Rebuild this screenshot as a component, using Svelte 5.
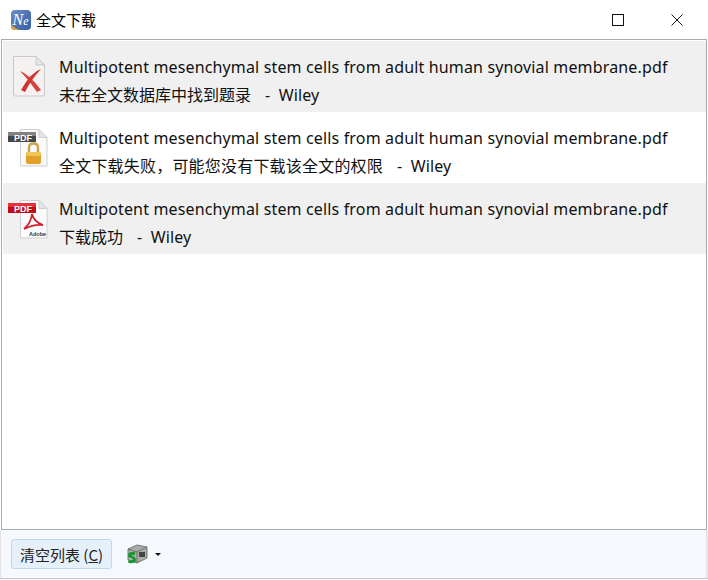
<script>
  const title = "Multipotent mesenchymal stem cells from adult human synovial membrane.pdf";
  const rows = [
    { kind: "missing", status: "未在全文数据库中找到题录", shaded: true, wide: false },
    { kind: "locked", status: "全文下载失败，可能您没有下载该全文的权限", shaded: false, wide: true },
    { kind: "ok", status: "下载成功", shaded: true, wide: false }
  ];
</script>

<div class="window">
  <header class="titlebar">
    <svg class="logo" width="20" height="20" viewBox="0 0 20 20">
      <defs>
        <linearGradient id="logoBg" x1="0" y1="0" x2="1" y2="1">
          <stop offset="0" stop-color="#6a8cc6" />
          <stop offset="1" stop-color="#345ea6" />
        </linearGradient>
      </defs>
      <rect width="20" height="20" rx="4" fill="url(#logoBg)" />
      <path d="M0 14 Q3 18.5 9 20 L4 20 Q0 20 0 16Z" fill="#e8a33c" />
      <text x="1.5" y="15" class="logo-text">N<tspan class="logo-small">e</tspan></text>
    </svg>
    <span class="window-title">全文下载</span>
    <div class="controls">
      <svg width="12" height="12" viewBox="0 0 12 12"><rect x="0.5" y="0.5" width="11" height="11" fill="none" stroke="#111" /></svg>
      <svg width="12" height="12" viewBox="0 0 12 12"><path d="M0.5 0.5 L11.5 11.5 M11.5 0.5 L0.5 11.5" stroke="#111" stroke-width="1" /></svg>
    </div>
  </header>

  <main class="list">
    {#each rows as row}
      <div class="row" class:shaded={row.shaded}>
        <div class="icon">
          {#if row.kind === "missing"}
            <svg width="40" height="44" viewBox="0 0 40 44">
              <path d="M5.5 1.5 H28 L36.5 10 V39 Q36.5 41 35 41 H7 Q5.5 41 5.5 39Z" fill="#f4f1f0" stroke="#c9c9c9" />
              <path d="M28 1.5 V10 H36.5Z" fill="#e6e6e6" stroke="#c9c9c9" />
              <path d="M12 16 Q21 19 33 35 L29 37 Q21 25 12 16Z" fill="#d8423c" />
              <path d="M33 14 Q23 17 13 35 L17 37 Q23 25 33 14Z" fill="#cc3632" />
            </svg>
          {:else if row.kind === "locked"}
            <svg width="40" height="44" viewBox="0 0 40 44">
              <path d="M12.5 3.5 H31 L39 11.5 V40 H12.5Z" fill="#fafafa" stroke="#cfcfcf" />
              <path d="M31 3.5 V11.5 H39Z" fill="#e4e4e4" stroke="#cfcfcf" />
              <rect x="0" y="6" width="28" height="10" fill="#454648" />
              <rect x="0" y="6" width="28" height="4" fill="#808284" />
              <text x="6" y="15" class="pdf-tag">PDF</text>
              <path d="M21 27 V21.5 Q21 17.5 25.5 17.5 Q30 17.5 30 21.5 V27" fill="none" stroke="#c9a24a" stroke-width="2.4" />
              <rect x="18" y="26" width="15" height="12" rx="2" fill="#e2a029" />
              <rect x="18" y="26" width="15" height="4" rx="2" fill="#f3c552" />
            </svg>
          {:else}
            <svg width="40" height="44" viewBox="0 0 40 44">
              <path d="M12.5 3.5 H31 L39 11.5 V41 H12.5Z" fill="#fdfdfd" stroke="#cfcfcf" />
              <path d="M31 3.5 V11.5 H39Z" fill="#e4e4e4" stroke="#cfcfcf" />
              <rect x="0" y="6" width="28" height="10" fill="#c00d18" />
              <rect x="0" y="6" width="28" height="4" fill="#e8323a" />
              <text x="6" y="15" class="pdf-tag">PDF</text>
              <path d="M24 17 Q26 25 35 28 Q26 27 16 32 Q23 26 24 17Z" fill="none" stroke="#d02028" stroke-width="1.8" />
              <text x="21" y="39" class="adobe">Adobe</text>
            </svg>
          {/if}
        </div>
        <div class="text">
          <div class="name">{title}</div>
          <div class="status"><span class:wide={row.wide}>{row.status}</span><span class="source">- &nbsp;Wiley</span></div>
        </div>
      </div>
    {/each}
  </main>

  <footer class="footer">
    <button class="clear">清空列表 (<u>C</u>)</button>
    <div class="tool">
      <svg width="21" height="20" viewBox="0 0 21 20">
        <path d="M1 5 L10 1 L20 3 V14 L10 19 L1 16Z" fill="#a9ada9" stroke="#5f5f5f" stroke-width="0.8" />
        <path d="M1 5 L10 8 L20 3 M10 8 V19" fill="none" stroke="#5f5f5f" stroke-width="0.8" />
        <rect x="12" y="8" width="6" height="5" fill="#41463f" />
        <path d="M8 9.5 Q2 8.5 2.5 12 Q8 13.5 7.5 16.5 Q4 19 1.5 17" fill="none" stroke="#129a28" stroke-width="2.8" />
      </svg>
      <span class="caret"></span>
    </div>
  </footer>
</div>

<style>
  :global(body) {
    margin: 0;
    background: #fff;
  }
  .window {
    width: 708px;
    height: 579px;
    box-sizing: border-box;
    display: flex;
    flex-direction: column;
    font-family: "Noto Sans", "Noto Sans CJK SC", sans-serif;
    color: #111;
    border-bottom: 1px solid #c4c4ca;
  }
  .titlebar {
    height: 39px;
    flex: none;
    display: flex;
    align-items: center;
    padding-left: 11px;
  }
  .logo-text {
    font-family: "Liberation Serif", serif;
    font-style: italic;
    font-size: 16px;
    fill: #fff;
  }
  .logo-small {
    font-size: 12px;
  }
  .window-title {
    margin-left: 5px;
    font-size: 15px;
    font-family: "Noto Sans CJK SC", sans-serif;
    color: #000;
  }
  .controls {
    margin-left: auto;
    display: flex;
    align-items: center;
    gap: 47px;
    padding-right: 25px;
  }
  .list {
    flex: 1;
    margin: 0 1px;
    border: 1px solid #a9a9b0;
    padding: 1px 0 0 1px;
    background: #fff;
  }
  .row {
    height: 71px;
    display: flex;
    align-items: flex-start;
  }
  .shaded {
    background: #f0f0f0;
  }
  .icon {
    width: 51px;
    flex: none;
    padding: 14px 0 0 5px;
  }
  .icon svg {
    display: block;
  }
  .text {
    padding-top: 12px;
    font-size: 16px;
    line-height: 28px;
    white-space: nowrap;
  }
  .name {
    letter-spacing: 0.15px;
  }
  .wide {
    letter-spacing: 0.2px;
  }
  .source {
    margin-left: 14px;
    letter-spacing: 0.1px;
  }
  .pdf-tag {
    font-family: "Liberation Sans", sans-serif;
    font-size: 9px;
    font-weight: 700;
    fill: #fff;
  }
  .adobe {
    font-family: "Liberation Sans", sans-serif;
    font-size: 5.5px;
    font-weight: 700;
    fill: #333;
  }
  .footer {
    height: 48px;
    flex: none;
    display: flex;
    align-items: center;
    background: #f5f9fe;
    padding-left: 10px;
    border-right: 2px solid #e6e6ea;
    border-left: 1px solid #e6e6ea;
  }
  .clear {
    width: 101px;
    height: 30px;
    padding: 0;
    background: #e6f0fb;
    border: 1px solid #bcd6f1;
    border-radius: 3px;
    font-family: "Noto Sans CJK SC", sans-serif;
    font-size: 15px;
    color: #222;
    white-space: nowrap;
  }
  .tool {
    margin-left: 15px;
    display: flex;
    align-items: center;
    gap: 7px;
  }
  .caret {
    width: 0;
    height: 0;
    border-left: 3px solid transparent;
    border-right: 3px solid transparent;
    border-top: 3px solid #111;
  }
</style>
